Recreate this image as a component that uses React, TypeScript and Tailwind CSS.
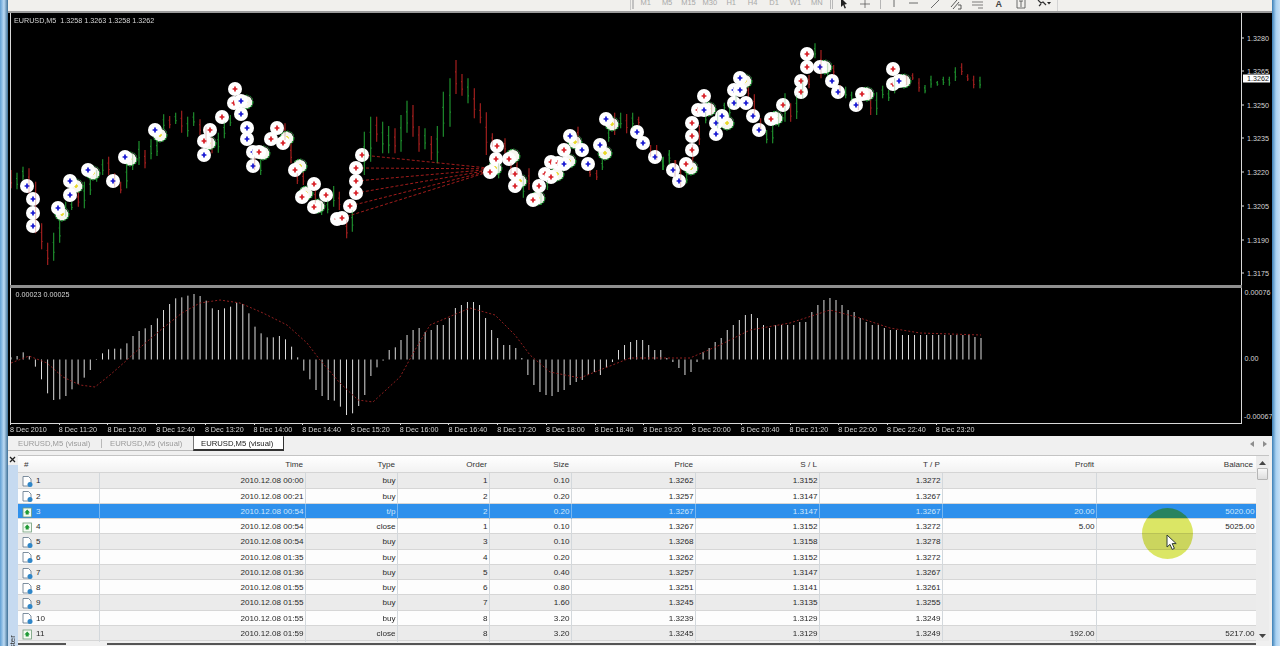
import React from 'react'

type Candle = [number, number, number, 'g' | 'r']
type Marker = [number, number, 'b' | 'r']

const GREEN = '#1f8f2e'
const RED = '#a3201f'

// candle columns read from the picture: [x, top, bottom, colour], offset by the crop they came from
const fromCrop = (ox: number, oy: number, list: Candle[]): Candle[] =>
  list.map(([x, t, b, c]) => [ox + x / 3, oy + t / 3, oy + b / 3, c])

const candles: Candle[] = [
  ...fromCrop(0, 60, [
    [33, 330, 385, 'r'], [51, 338, 388, 'g'], [69, 320, 360, 'g'], [87, 325, 400, 'r'], [107, 365, 520, 'r'],
    [125, 490, 568, 'r'], [143, 548, 615, 'r'], [161, 518, 602, 'g'], [179, 480, 548, 'g'], [197, 425, 470, 'g'],
    [215, 425, 450, 'g'], [235, 395, 440, 'r'], [253, 365, 445, 'g'], [271, 355, 405, 'g'], [290, 330, 365, 'g'],
    [308, 298, 345, 'g'], [326, 290, 345, 'r'], [344, 340, 380, 'r'], [362, 365, 400, 'r'], [380, 310, 385, 'g'],
    [398, 280, 330, 'g'], [417, 243, 315, 'g'], [435, 270, 325, 'r'], [453, 238, 298, 'g'], [471, 240, 288, 'g'],
    [491, 163, 210, 'g'], [509, 168, 205, 'r'], [527, 158, 192, 'g'], [545, 152, 218, 'r'], [563, 170, 230, 'g'],
    [581, 157, 198, 'g'], [600, 178, 225, 'r'], [618, 200, 250, 'r'], [636, 230, 280, 'r'], [655, 218, 278, 'g'],
    [673, 185, 235, 'g'], [691, 165, 198, 'g'], [764, 290, 330, 'r'], [782, 300, 345, 'g'], [855, 190, 240, 'r'],
    [873, 250, 310, 'r'], [892, 340, 372, 'r'], [910, 335, 375, 'r'], [946, 390, 430, 'r'], [965, 430, 465, 'g'],
    [983, 420, 460, 'g'], [1001, 378, 440, 'g'], [1018, 395, 450, 'r'],
  ]),
  ...fromCrop(340, 50, [
    [20, 510, 565, 'r'], [37, 480, 545, 'g'], [73, 245, 375, 'g'], [92, 200, 335, 'g'], [110, 200, 275, 'r'],
    [128, 215, 310, 'g'], [146, 228, 310, 'g'], [165, 235, 310, 'r'], [183, 195, 305, 'g'], [201, 152, 248, 'g'],
    [219, 165, 260, 'r'], [237, 228, 305, 'r'], [255, 235, 298, 'g'], [274, 258, 330, 'r'], [292, 228, 340, 'g'],
    [310, 125, 260, 'g'], [330, 85, 230, 'g'], [348, 30, 132, 'r'], [366, 72, 137, 'r'], [384, 85, 160, 'g'],
    [403, 115, 205, 'r'], [421, 160, 220, 'r'], [439, 187, 315, 'r'], [457, 250, 290, 'r'], [476, 340, 385, 'g'],
    [495, 265, 310, 'r'], [513, 340, 375, 'r'], [531, 335, 372, 'r'], [550, 380, 443, 'g'], [567, 355, 420, 'r'],
    [603, 430, 465, 'g'], [622, 390, 420, 'g'], [714, 230, 280, 'r'], [750, 360, 380, 'r'], [770, 360, 390, 'r'],
    [787, 330, 360, 'g'], [806, 235, 275, 'g'], [824, 188, 255, 'r'], [842, 188, 235, 'g'], [860, 192, 250, 'r'],
    [878, 188, 235, 'g'], [896, 200, 225, 'r'], [932, 285, 320, 'r'], [950, 285, 330, 'r'], [968, 322, 360, 'g'],
    [988, 300, 345, 'g'], [1005, 330, 380, 'r'],
  ]),
  ...fromCrop(660, 35, [
    [10, 365, 405, 'g'], [28, 345, 380, 'g'], [47, 375, 395, 'r'], [62, 400, 455, 'r'], [80, 410, 445, 'g'],
    [98, 330, 385, 'r'], [118, 270, 330, 'r'], [137, 230, 265, 'g'], [155, 205, 240, 'r'], [173, 230, 280, 'g'],
    [193, 203, 225, 'g'], [209, 205, 245, 'g'], [228, 180, 215, 'g'], [265, 155, 185, 'r'], [283, 178, 240, 'r'],
    [302, 250, 285, 'r'], [320, 285, 325, 'g'], [338, 270, 325, 'g'], [356, 230, 275, 'g'], [375, 175, 260, 'g'],
    [392, 205, 260, 'r'], [410, 180, 252, 'g'], [428, 130, 190, 'g'], [447, 120, 160, 'r'], [465, 25, 70, 'g'],
    [483, 45, 130, 'r'], [503, 85, 125, 'g'], [521, 90, 120, 'r'], [540, 150, 185, 'r'], [557, 155, 190, 'g'],
    [575, 170, 200, 'g'], [595, 200, 225, 'r'], [632, 170, 240, 'r'], [650, 172, 240, 'g'], [668, 152, 190, 'g'],
    [686, 165, 198, 'g'], [704, 130, 175, 'g'], [740, 120, 150, 'r'], [758, 115, 135, 'r'], [777, 130, 170, 'r'],
    [795, 150, 175, 'g'], [813, 122, 158, 'g'], [832, 138, 152, 'g'], [850, 125, 150, 'g'], [868, 125, 152, 'g'],
    [886, 97, 138, 'g'], [905, 85, 120, 'r'], [923, 118, 138, 'r'], [941, 122, 160, 'r'], [960, 125, 160, 'g'],
  ]),
]

// closed-position rings sit behind the open/close markers
const rings: [number, number][] = [
  [62, 214], [76, 186], [93, 173], [130, 159], [160, 135], [209, 143], [246, 102], [263, 153], [287, 138], [300, 166],
  [306, 193], [318, 206], [495, 168], [513, 156], [520, 181], [538, 198], [557, 174], [569, 161], [575, 142], [605, 153],
  [612, 124], [691, 168], [709, 109], [727, 123], [745, 81], [776, 118], [825, 67], [867, 94], [904, 81],
]

const markers: Marker[] = [
  [27, 186, 'b'], [33, 199, 'b'], [33, 213, 'b'], [33, 226, 'b'], [58, 208, 'b'], [70, 181, 'b'], [70, 195, 'b'],
  [88, 170, 'b'], [113, 181, 'b'], [125, 157, 'b'], [155, 130, 'b'], [210, 130, 'r'], [204, 141, 'r'], [204, 155, 'b'],
  [222, 117, 'r'], [235, 89, 'r'], [234, 103, 'r'], [241, 101, 'b'], [241, 114, 'b'], [247, 128, 'b'], [247, 139, 'b'],
  [253, 152, 'b'], [259, 152, 'r'], [253, 166, 'b'], [277, 128, 'r'], [271, 139, 'r'], [283, 143, 'r'], [295, 170, 'r'],
  [314, 184, 'r'], [302, 197, 'r'], [326, 195, 'r'], [314, 207, 'r'], [337, 219, 'r'], [342, 218, 'r'], [350, 206, 'r'],
  [356, 193, 'r'], [356, 181, 'r'], [356, 168, 'r'], [362, 155, 'r'], [497, 146, 'r'], [496, 159, 'r'], [509, 159, 'r'],
  [490, 172, 'r'], [515, 174, 'r'], [515, 186, 'r'], [533, 200, 'r'], [539, 186, 'r'], [545, 174, 'r'], [551, 177, 'r'],
  [551, 162, 'r'], [558, 163, 'r'], [564, 164, 'b'], [564, 150, 'r'], [570, 136, 'b'], [582, 150, 'b'], [588, 164, 'b'],
  [600, 145, 'b'], [606, 119, 'b'], [637, 132, 'b'], [643, 143, 'b'], [655, 157, 'b'], [673, 170, 'b'], [679, 181, 'b'],
  [686, 164, 'r'], [692, 150, 'r'], [692, 136, 'r'], [692, 123, 'r'], [698, 110, 'r'], [704, 96, 'r'], [704, 110, 'b'],
  [716, 123, 'b'], [722, 116, 'b'], [716, 134, 'b'], [734, 103, 'b'], [734, 90, 'b'], [740, 90, 'b'], [740, 78, 'b'],
  [746, 103, 'b'], [753, 116, 'b'], [759, 130, 'b'], [771, 119, 'r'], [783, 105, 'r'], [801, 92, 'r'], [801, 81, 'r'],
  [807, 67, 'r'], [807, 54, 'r'], [820, 67, 'b'], [832, 81, 'b'], [838, 92, 'b'], [862, 94, 'r'], [856, 105, 'b'],
  [893, 69, 'r'], [893, 84, 'r'], [899, 81, 'b'],
]

const fanStarts: [number, number][] = [[362, 155], [356, 168], [356, 181], [356, 193], [350, 206], [342, 218]]

// top/bottom y of each oscillator bar; left part is 6.1px apart from x=11, right part runs 401..981
const macdLeft = [
  232, 228, 217, 228, 260, 298, 340, 360, 358, 348, 328, 312, 293, 270, 240, 220, 208, 206, 206, 190, 168, 153, 145,
  135, 115, 90, 72, 55, 52, 47, 42, 48, 62, 85, 90, 85, 80, 68, 72, 100, 140, 160, 172, 172, 168, 178, 200, 232, 272,
  298, 330, 348, 360, 362, 380, 405, 400, 378, 345, 288, 262, 242, 210, 202,
].map((v, i) => [11 + i * 6.1, 280 + v / 3])
const macdRightY = [
  340, 335, 330, 328, 332, 330, 325, 325, 318, 308, 305, 302, 302, 305, 318, 330, 338, 345, 345, 348, 358, 375,
  385, 392, 395, 396, 392, 390, 385, 382, 380, 375, 372, 375, 368, 362, 350, 345, 342, 340, 340, 345, 350, 350, 358,
  362, 368, 375, 372, 362, 352, 348, 342, 338, 330, 325, 320, 315, 314, 318, 325, 328, 325, 325, 325, 325, 322, 322,
  312, 305, 300, 298, 300, 305, 310, 312, 318, 322, 325, 325, 328, 330, 330, 335, 335, 335, 335, 335, 335, 335, 335,
  335, 335, 335, 335, 337, 338,
]
const macdRight = macdRightY.map((y, i) => [401 + (i * 580) / (macdRightY.length - 1), y])
const macdBars = [...macdLeft, ...macdRight]

const signalPoints =
  '11,363 29,356 47,363 63,377 80,385 95,387 110,375 127,360 143,345 163,328 182,313 200,303 220,300 240,303 263,313 287,325 307,343 320,360 340,383 358,400 373,402 400,377 415,350 430,325 470,308 495,315 515,335 530,355 550,372 580,378 600,370 630,358 660,358 690,358 720,345 750,330 790,323 830,310 860,318 890,328 920,333 981,335'

const priceTicks = [
  ['1.3280', 38], ['1.3265', 71], ['1.3250', 105], ['1.3235', 138], ['1.3220', 172], ['1.3205', 206], ['1.3190', 240], ['1.3175', 273],
] as const

const timeLabels = [
  '8 Dec 2010', '8 Dec 11:20', '8 Dec 12:00', '8 Dec 12:40', '8 Dec 13:20', '8 Dec 14:00', '8 Dec 14:40', '8 Dec 15:20',
  '8 Dec 16:00', '8 Dec 16:40', '8 Dec 17:20', '8 Dec 18:00', '8 Dec 18:40', '8 Dec 19:20', '8 Dec 20:00', '8 Dec 20:40',
  '8 Dec 21:20', '8 Dec 22:00', '8 Dec 22:40', '8 Dec 23:20',
]

const periods = ['M1', 'M5', 'M15', 'M30', 'H1', 'H4', 'D1', 'W1', 'MN']

const gridCols = 'grid grid-cols-[82px_206px_92px_92px_82px_124px_124px_123px_154px_159px]'

const headers = ['Time', 'Type', 'Order', 'Size', 'Price', 'S / L', 'T / P', 'Profit', 'Balance']

type Row = { n: number; time: string; type: string; order: string; size: string; price: string; sl: string; tp: string; profit?: string; balance?: string; deal?: boolean }

const rows: Row[] = [
  { n: 1, time: '00:00', type: 'buy', order: '1', size: '0.10', price: '1.3262', sl: '1.3152', tp: '1.3272' },
  { n: 2, time: '00:21', type: 'buy', order: '2', size: '0.20', price: '1.3257', sl: '1.3147', tp: '1.3267' },
  { n: 3, time: '00:54', type: 't/p', order: '2', size: '0.20', price: '1.3267', sl: '1.3147', tp: '1.3267', profit: '20.00', balance: '5020.00', deal: true },
  { n: 4, time: '00:54', type: 'close', order: '1', size: '0.10', price: '1.3267', sl: '1.3152', tp: '1.3272', profit: '5.00', balance: '5025.00', deal: true },
  { n: 5, time: '00:54', type: 'buy', order: '3', size: '0.10', price: '1.3268', sl: '1.3158', tp: '1.3278' },
  { n: 6, time: '01:35', type: 'buy', order: '4', size: '0.20', price: '1.3262', sl: '1.3152', tp: '1.3272' },
  { n: 7, time: '01:36', type: 'buy', order: '5', size: '0.40', price: '1.3257', sl: '1.3147', tp: '1.3267' },
  { n: 8, time: '01:55', type: 'buy', order: '6', size: '0.80', price: '1.3251', sl: '1.3141', tp: '1.3261' },
  { n: 9, time: '01:55', type: 'buy', order: '7', size: '1.60', price: '1.3245', sl: '1.3135', tp: '1.3255' },
  { n: 10, time: '01:55', type: 'buy', order: '8', size: '3.20', price: '1.3239', sl: '1.3129', tp: '1.3249' },
  { n: 11, time: '01:59', type: 'close', order: '8', size: '3.20', price: '1.3245', sl: '1.3129', tp: '1.3249', profit: '192.00', balance: '5217.00', deal: true },
]

function OrderIcon() {
  return (
    <svg width="11" height="11" viewBox="0 0 11 11" className="shrink-0">
      <path d="M1 .5h5.5L9 3v7H1z" fill="#fff" stroke="#5d7286" strokeWidth="0.8" />
      <circle cx="8" cy="8.4" r="2.5" fill="#2f86c8" />
    </svg>
  )
}

function DealIcon() {
  return (
    <svg width="11" height="11" viewBox="0 0 11 11" className="shrink-0">
      <rect x="1" y="1" width="8.5" height="9" fill="#f4fbf2" stroke="#6f9c78" strokeWidth="0.8" />
      <path d="M5.2 2.6 8 5.4H6.7v2.2H3.7V5.4H2.4z" fill="#1f9a35" />
    </svg>
  )
}

function ToolIcons() {
  const c = '#4a4a4a'
  return (
    <div className="flex items-start">
      <svg width="10" height="11" viewBox="0 0 10 11" className="ml-[6px]"><path d="M2 -2 8 4 5.5 4.4 7 8 5.6 8.6 4.2 5 2 7z" fill="#222" /></svg>
      <svg width="12" height="11" viewBox="0 0 12 11" className="ml-[10px]"><path d="M6 0v8M1 4h10" stroke={c} strokeWidth="0.7" /></svg>
      <div className="ml-[9px] h-[9px] w-px bg-[#b5b5b5]" />
      <svg width="6" height="11" viewBox="0 0 6 11" className="ml-[10px]"><path d="M3 0v7" stroke={c} strokeWidth="0.8" /></svg>
      <svg width="10" height="11" viewBox="0 0 10 11" className="ml-[12px]"><path d="M0 3h9" stroke={c} strokeWidth="0.8" /></svg>
      <svg width="10" height="11" viewBox="0 0 10 11" className="ml-[11px]"><path d="M1 8 9 0" stroke={c} strokeWidth="0.8" /></svg>
      <svg width="12" height="11" viewBox="0 0 12 11" className="ml-[10px]"><path d="M1 7 7 0M3 9 9 2M8 5h3v4H8" stroke={c} strokeWidth="0.9" fill="none" /></svg>
      <svg width="12" height="11" viewBox="0 0 12 11" className="ml-[10px]"><path d="M0 2h11M0 5h11M6 8h5" stroke={c} strokeWidth="0.7" /></svg>
      <span className="ml-[12px] mt-[-2px] text-[9px] font-bold leading-[12px] text-[#444]">A</span>
      <svg width="10" height="11" viewBox="0 0 10 11" className="ml-[14px]"><path d="M1 0v8h8V0M3 1h4M5 1v6" stroke={c} strokeWidth="0.8" fill="none" /></svg>
      <svg width="14" height="11" viewBox="0 0 14 11" className="ml-[11px]"><path d="M1 0l3 3 2-1 3 3M2 6l2-2" stroke="#333" strokeWidth="1.2" fill="none" /><path d="M10 2h4l-2 2.4z" fill="#222" /></svg>
    </div>
  )
}

function TopBar() {
  return (
    <div className="flex h-[13px] shrink-0 overflow-hidden border-b-2 border-[#9c9c9c] bg-[#f1f0ed] pl-[622px]">
      <div className="flex h-[10px] items-start border-l border-[#c9c9c9] pl-[1px]">
        <div className="h-[9px] w-[2px] bg-[#c2c2c2]" />
        <div className="flex">
          {periods.map((p) => (
            <span key={p} className="-mt-[2px] w-[21.4px] text-center text-[7.5px] leading-[9px] text-[#a8a8a8] first:ml-[1px]">
              {p}
            </span>
          ))}
        </div>
        <div className="ml-[2px] h-[9px] w-[3px] border-x border-[#b9b9b9]" />
        <ToolIcons />
      </div>
      <div className="ml-[6px] h-[11px] w-px bg-[#d4d4d4]" />
    </div>
  )
}

function PriceChart() {
  return (
    <svg width="1230" height="272" viewBox="11 13 1230 272" className="block blur-[0.3px]">
      <text x="14" y="23" fontSize="7.2" fill="#d6d6d6" xmlSpace="preserve">EURUSD,M5  1.3258 1.3263 1.3258 1.3262</text>
      {candles.map(([x, t, b, c], i) => (
        <g key={i} stroke={c === 'g' ? GREEN : RED} strokeWidth="1.1">
          <line x1={x} x2={x} y1={t} y2={b} />
          <line x1={x - 1} x2={x} y1={t + (b - t) * 0.35} y2={t + (b - t) * 0.35} />
          <line x1={x} x2={x + 1} y1={t + (b - t) * 0.7} y2={t + (b - t) * 0.7} />
        </g>
      ))}
      {fanStarts.map(([x, y], i) => (
        <line key={i} x1={x} y1={y} x2={488} y2={168 + i * 0.8} stroke="#b3201f" strokeWidth="0.9" strokeDasharray="3 2" />
      ))}
      {rings.map(([x, y], i) => (
        <g key={i}>
          <circle cx={x} cy={y} r="6.8" fill="#f6f6f0" stroke="#1f9a35" strokeWidth="1.3" strokeDasharray="2 1.2" />
          <path d={`M${x + 1} ${y - 6.5}a6.6 6.6 0 0 1 5.5 5`} fill="none" stroke="#222" strokeWidth="0.9" />
          <path d={`M${x - 2} ${y}h4M${x} ${y - 2}v4`} stroke="#e8d820" strokeWidth="1.6" />
        </g>
      ))}
      {markers.map(([x, y, c], i) => (
        <g key={i}>
          <circle cx={x} cy={y} r="7" fill="#fff" />
          <path d={`M${x - 2.4} ${y}h4.8M${x} ${y - 2.4}v4.8`} stroke={c === 'b' ? '#1414d2' : '#d81c24'} strokeWidth="1.7" />
        </g>
      ))}
      {/* candle stems show faintly through the markers */}
      {candles.map(([x, t, b, c], i) => (
        <line key={i} x1={x} x2={x} y1={t} y2={b} stroke={c === 'g' ? GREEN : RED} strokeWidth="0.8" opacity="0.35" />
      ))}
    </svg>
  )
}

function IndicatorChart() {
  return (
    <svg width="1230" height="135" viewBox="11 288 1230 135" className="block blur-[0.25px]">
      <text x="15.5" y="296.6" fontSize="7.2" fill="#d6d6d6">0.00023 0.00025</text>
      {macdBars.map(([x, y], i) => (
        <line key={i} x1={x} x2={x} y1={Math.min(y, 359.5)} y2={Math.max(y, 359.5)} stroke="#dcdcdc" strokeWidth="1" />
      ))}
      <polyline points={signalPoints} fill="none" stroke="#8f1f1f" strokeWidth="1" strokeDasharray="2 2" />
    </svg>
  )
}

function PriceAxis() {
  return (
    <svg width="30" height="272" viewBox="1242 13 30 272" className="block">
      {priceTicks.map(([label, y]) => (
        <g key={label}>
          <line x1="1242" x2="1244" y1={y} y2={y} stroke="#ddd" />
          <text x="1247" y={y + 2.6} fontSize="7.2" fill="#d6d6d6">{label}</text>
        </g>
      ))}
      <rect x="1243" y="74.5" width="27" height="8" fill="#fff" />
      <text x="1247" y="81" fontSize="7.2" fill="#222">1.3262</text>
    </svg>
  )
}

function IndicatorAxis() {
  const ticks = [['0.00076', 292], ['0.00', 358], ['-0.00067', 416]] as const
  return (
    <svg width="30" height="135" viewBox="1242 288 30 135" className="block">
      {ticks.map(([label, y]) => (
        <text key={label} x={label[0] === '-' ? 1244 : 1244.5} y={y + 2.6} fontSize="7.2" fill="#d6d6d6">{label}</text>
      ))}
    </svg>
  )
}

function ChartWindow() {
  return (
    <div className="flex h-[423px] shrink-0 flex-col bg-black pl-[2px]">
      <div className="flex h-[272px] shrink-0">
        <div className="border-x border-[#d8d8d8]"><PriceChart /></div>
        <PriceAxis />
      </div>
      <div className="mr-[30px] h-[3px] shrink-0 bg-[#8f8f8f]" />
      <div className="flex h-[136px] shrink-0">
        <div className="border-x border-b border-[#d8d8d8]"><IndicatorChart /></div>
        <IndicatorAxis />
      </div>
      <div className="flex">
        {timeLabels.map((t) => (
          <div key={t} className="w-[48.72px] shrink-0">
            <div className="h-[1px] w-px bg-[#d8d8d8]" />
            <div className="whitespace-nowrap text-[7.2px] leading-[10px] text-[#d6d6d6]">{t}</div>
          </div>
        ))}
      </div>
    </div>
  )
}

function Tabs() {
  return (
    <div className="flex h-[15px] shrink-0 items-stretch text-[7.7px] leading-[15px]">
      <div className="flex w-[185px] border-b border-[#b9b9b9] pl-[10px] text-[#9a9a9a]">
        <span className="w-[83px]">EURUSD,M5 (visual)</span>
        <span className="mt-[3px] h-[9px] w-px bg-[#b9b9b9]" />
        <span className="ml-[8px]">EURUSD,M5 (visual)</span>
      </div>
      <div className="w-[91px] rounded-tr-[1px] border-x border-b-2 border-[#333] border-l-[#777] bg-white pl-[7px] text-[#222]">
        EURUSD,M5 (visual)
      </div>
      <div className="ml-auto flex w-[26px] items-center justify-end gap-[7px] pr-[5px]">
        <svg width="5" height="6" viewBox="0 0 5 6"><path d="M4 0v6L0 3z" fill="#8d8d8d" /></svg>
        <svg width="5" height="6" viewBox="0 0 5 6"><path d="M1 0v6l4-3z" fill="#8d8d8d" /></svg>
      </div>
    </div>
  )
}

function TradeRow({ row }: { row: Row }) {
  const selected = row.n === 3
  const bg = selected ? 'bg-[#2e90ec] text-[#cfe6fb]' : row.n % 2 === 1 ? 'bg-[#ebebeb] text-[#2a2a2a]' : 'bg-[#fdfdfd] text-[#2a2a2a]'
  const line = selected ? 'border-[#77b6f0]' : 'border-[#d3d8dc]'
  const cells = [`2010.12.08 ${row.time}`, row.type, row.order, row.size, row.price, row.sl, row.tp, row.profit ?? '', row.balance ?? '']
  return (
    <div className={`${gridCols} h-[15.25px] border-b border-[#d6d6d6] ${bg}`}>
      <div className={`flex items-center border-r pl-[4px] ${line}`}>
        {row.deal ? <DealIcon /> : <OrderIcon />}
        <span className="ml-[3px]">{row.n}</span>
      </div>
      {cells.map((c, i) => (
        <div key={i} className={`pr-[1.5px] text-right ${i < 8 ? `border-r ${line}` : ''}`}>
          {c}
        </div>
      ))}
    </div>
  )
}

function Terminal() {
  return (
    <div className="relative flex min-h-0 flex-1 flex-col overflow-hidden bg-[#f0f0f0]">
      <Tabs />
      <div className="mt-[4px] flex min-h-0 flex-1">
        <div className="flex w-[10px] shrink-0 flex-col">
          <svg width="7" height="7" viewBox="0 0 7 7" className="ml-[1px] mt-[1px] shrink-0"><path d="M1 1l5 5M6 1 1 6" stroke="#222" strokeWidth="1.3" /></svg>
          <div className="mt-[2px] flex-1 overflow-hidden bg-[#c6daf0] pt-[170px]">
            <div className="rotate-180 text-[8px] leading-[10px] text-[#333] [writing-mode:vertical-rl]">Tester</div>
          </div>
        </div>
        <div className="w-[1238px] shrink-0 text-[8.1px] leading-[16.5px]">
          <div className={`${gridCols} h-[18.4px] border-y border-t-[#c4c4c4] border-b-[#d4d4d4] bg-gradient-to-b from-white to-[#f2f2f2] leading-[18px] text-[#333]`}>
            <div className="pl-[6px]">#</div>
            {headers.map((h) => (
              <div key={h} className="pr-[3px] text-right">{h}</div>
            ))}
          </div>
          {rows.map((r) => (
            <TradeRow key={r.n} row={r} />
          ))}
          <div className="mt-[2px] flex h-[2px]">
            <div className="w-[48px] bg-[#555]" />
            <div className="w-[41px]" />
            <div className="flex-1 bg-[#555]" />
          </div>
        </div>
        <div className="flex h-[186px] w-[13px] shrink-0 flex-col items-center border-t border-[#c4c4c4] bg-[#ececec] pt-[5px]">
          <svg width="7" height="4" viewBox="0 0 7 4" className="shrink-0"><path d="M3.5 0 7 4H0z" fill="#444" /></svg>
          <div className="mt-[3px] h-[12px] w-[11px] rounded-[1px] border border-[#b5b5b5] bg-gradient-to-b from-[#f8f8f8] to-[#dedede]" />
          <svg width="7" height="4" viewBox="0 0 7 4" className="mt-auto mb-[3px] shrink-0"><path d="M0 0h7L3.5 4z" fill="#444" /></svg>
        </div>
      </div>
      {/* recorder highlight that follows the mouse */}
      <div className="absolute left-[1134px] top-[72px] h-[51px] w-[51px] rounded-full bg-[#dde866] mix-blend-multiply" />
      <svg width="13" height="16" viewBox="0 0 13 16" className="absolute left-[1158px] top-[98px]">
        <path d="M1 1v12l3-2.6 2.2 5 2.2-1-2.2-4.8h4z" fill="#fff" stroke="#2c3a33" strokeWidth="1" />
      </svg>
    </div>
  )
}

export default function App() {
  return (
    <div className="flex h-[646px] w-[1280px] overflow-hidden font-['Liberation_Sans',Arial,sans-serif]">
      <div className="w-2 shrink-0 bg-gradient-to-r from-[#5f9fd4] via-[#bcdaf3] to-[#3d6f96]" />
      <div className="flex w-[1264px] shrink-0 flex-col">
        <TopBar />
        <ChartWindow />
        <Terminal />
      </div>
      <div className="w-2 shrink-0 bg-gradient-to-r from-[#3a7fb5] via-[#a9d2f2] to-[#c6e0f6]" />
    </div>
  )
}
